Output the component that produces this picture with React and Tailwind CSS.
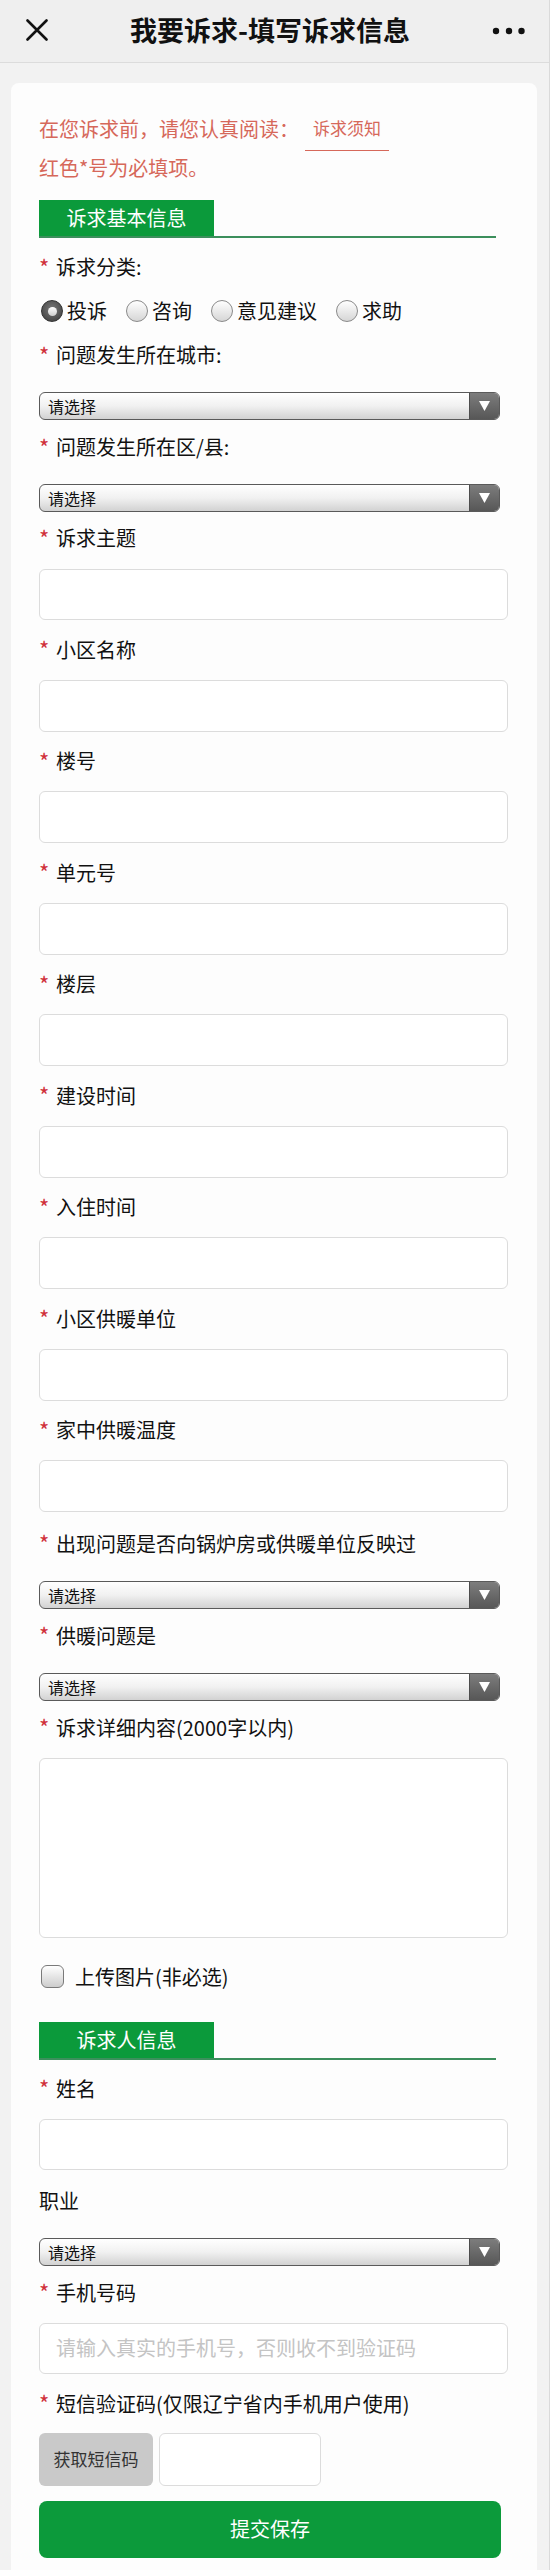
import React from "react";

const Star = () => (
  <span className="w-[17px] shrink-0 text-[22px] leading-[22px] text-[#d0303a] -mt-[3px]">*</span>
);

const Label = ({ children, req = true, className = "" }) => (
  <div className={"flex items-center h-[30px] text-[20px] leading-[30px] text-[#111] " + className}>
    {req && <Star />}
    <span>{children}</span>
  </div>
);

const Input = ({ className = "", placeholder = "" }) => (
  <div
    className={
      "w-full rounded-[6px] border-[1.5px] border-[#dcdcdc] bg-white flex items-center pl-[16px] text-[20px] text-[#c4c4c4] " +
      className
    }
  >
    {placeholder}
  </div>
);

const Select = ({ className = "" }) => (
  <div
    className={
      "w-[461px] h-[28px] rounded-[6px] border-[1.5px] border-[#5a5a5a] flex overflow-hidden bg-gradient-to-b from-[#ffffff] via-[#f1f1f1] to-[#d2d2d2] " +
      className
    }
  >
    <div className="flex-1 flex items-center pl-[8px] text-[16px] text-[#111] leading-[20px]">请选择</div>
    <div className="w-[30px] h-full flex items-center justify-center bg-gradient-to-b from-[#7d7d7d] to-[#575757] border-l border-[#4d4d4d]">
      <svg width="11" height="10" viewBox="0 0 11 10">
        <polygon points="0,0 11,0 5.5,10" fill="#fff" />
      </svg>
    </div>
  </div>
);

const Radio = ({ checked }) =>
  checked ? (
    <span className="w-[22px] h-[22px] rounded-full bg-[radial-gradient(circle_at_50%_40%,#7a7a7a,#3a3a3a)] border border-[#333] flex items-center justify-center shrink-0">
      <span className="w-[9px] h-[9px] rounded-full bg-gradient-to-b from-[#ffffff] to-[#cfcfcf]" />
    </span>
  ) : (
    <span className="w-[22px] h-[22px] rounded-full border-[1.5px] border-[#8a8a8a] bg-gradient-to-b from-[#ffffff] to-[#d6d6d6] shrink-0" />
  );

const Section = ({ title, className = "" }) => (
  <div className={"w-[457px] border-b-2 border-[#3c8f5c] " + className}>
    <div className="w-[175px] h-[36px] bg-[#0b9a3b] flex items-center justify-center text-[20px] text-white leading-[36px]">
      {title}
    </div>
  </div>
);

const textFields = ["小区名称", "楼号", "单元号", "楼层", "建设时间", "入住时间", "小区供暖单位", "家中供暖温度"];

export default function App() {
  return (
    <div className="w-[550px] min-h-[2570px] bg-[#f2f2f2] font-['Noto_Sans_CJK_SC','Noto_Sans',sans-serif] border-r border-[#dadada]">
      {/* Header */}
      <div className="h-[63px] bg-[#efefef] border-b border-[#dcdcdc] flex items-center justify-between px-[26px] relative">
        <svg width="22" height="22" viewBox="0 0 22 22" className="shrink-0 -mt-[2px]">
          <path d="M1.5 1.5 L20.5 20.5 M20.5 1.5 L1.5 20.5" stroke="#111" strokeWidth="2.6" strokeLinecap="round" />
        </svg>
        <div className="text-[27px] font-semibold text-[#111] leading-[34px] -mt-[2px]">我要诉求-填写诉求信息</div>
        <svg width="34" height="8" viewBox="0 0 34 8" className="shrink-0 -mr-[3px] -mt-[1px]">
          <circle cx="4" cy="4" r="3.2" fill="#111" />
          <circle cx="17" cy="4" r="3.2" fill="#111" />
          <circle cx="29.5" cy="4" r="3.2" fill="#111" />
        </svg>
      </div>

      {/* Card */}
      <div className="mt-[20px] ml-[11px] mr-[12px] bg-[#fdfdfd] rounded-[8px] pl-[28px] pr-[29px] pt-[25.5px] pb-[30px]">
        <div className="h-[39px] flex items-start text-[20px] leading-[39px] text-[#d6685a]">
          <span>在您诉求前，请您认真阅读：</span>
          <span className="ml-[6px] mt-[8.5px] px-[8px] text-[17px] leading-[22px] pb-[11px] border-b-[1.5px] border-[#d6685a] h-[34px]">
            诉求须知
          </span>
        </div>
        <div className="h-[39px] text-[20px] leading-[39px] text-[#d6685a]">红色*号为必填项。</div>

        <Section title="诉求基本信息" className="mt-[13.5px]" />

        <Label className="mt-[14px]">诉求分类:</Label>
        <div className="mt-[14px] h-[30px] flex items-center pl-[2px] text-[20px] text-[#111]">
          {[
            ["投诉", true],
            ["咨询", false],
            ["意见建议", false],
            ["求助", false],
          ].map(([t, c]) => (
            <div key={t} className="flex items-center mr-[19px]">
              <Radio checked={c} />
              <span className="ml-[4px] leading-[30px]">{t}</span>
            </div>
          ))}
        </div>

        <Label className="mt-[14px]">问题发生所在城市:</Label>
        <Select className="mt-[22px]" />
        <Label className="mt-[12px]">问题发生所在区/县:</Label>
        <Select className="mt-[22px]" />

        <Label className="mt-[11px]">诉求主题</Label>
        <Input className="mt-[16px] h-[51px]" />

        {textFields.map((t) => (
          <div key={t}>
            <Label className="mt-[14.5px]">{t}</Label>
            <Input className="mt-[15px] h-[52px]" />
          </div>
        ))}

        <Label className="mt-[16.5px]">出现问题是否向锅炉房或供暖单位反映过</Label>
        <Select className="mt-[22px]" />
        <Label className="mt-[12px]">供暖问题是</Label>
        <Select className="mt-[22px]" />
        <Label className="mt-[12px]">诉求详细内容(2000字以内)</Label>
        <Input className="mt-[15px] h-[180px]" />

        <div className="mt-[24px] h-[30px] flex items-center pl-[2px]">
          <span className="w-[23px] h-[23px] rounded-[6px] border-[1.5px] border-[#7a7a7a] bg-gradient-to-b from-[#ffffff] to-[#cdcdcd] shrink-0" />
          <span className="ml-[11px] text-[20px] leading-[30px] text-[#111]">上传图片(非必选)</span>
        </div>

        <Section title="诉求人信息" className="mt-[30px]" />

        <Label className="mt-[14px]">姓名</Label>
        <Input className="mt-[15px] h-[51px]" />

        <Label req={false} className="mt-[16px]">职业</Label>
        <Select className="mt-[22px]" />

        <Label className="mt-[12px]">手机号码</Label>
        <Input className="mt-[15px] h-[51px]" placeholder="请输入真实的手机号，否则收不到验证码" />

        <Label className="mt-[15px]">短信验证码(仅限辽宁省内手机用户使用)</Label>
        <div className="mt-[14px] h-[53px] flex gap-[6px]">
          <div className="w-[114px] h-full rounded-[6px] bg-[#c9c9c9] flex items-center justify-center text-[17px] text-[#333]">
            获取短信码
          </div>
          <div className="w-[162px] h-full rounded-[6px] border-[1.5px] border-[#dcdcdc] bg-white" />
        </div>

        <div className="mt-[15px] w-[462px] h-[57px] rounded-[8px] bg-[#0c9a3b] flex items-center justify-center text-[20px] text-white">
          提交保存
        </div>
      </div>
    </div>
  );
}
